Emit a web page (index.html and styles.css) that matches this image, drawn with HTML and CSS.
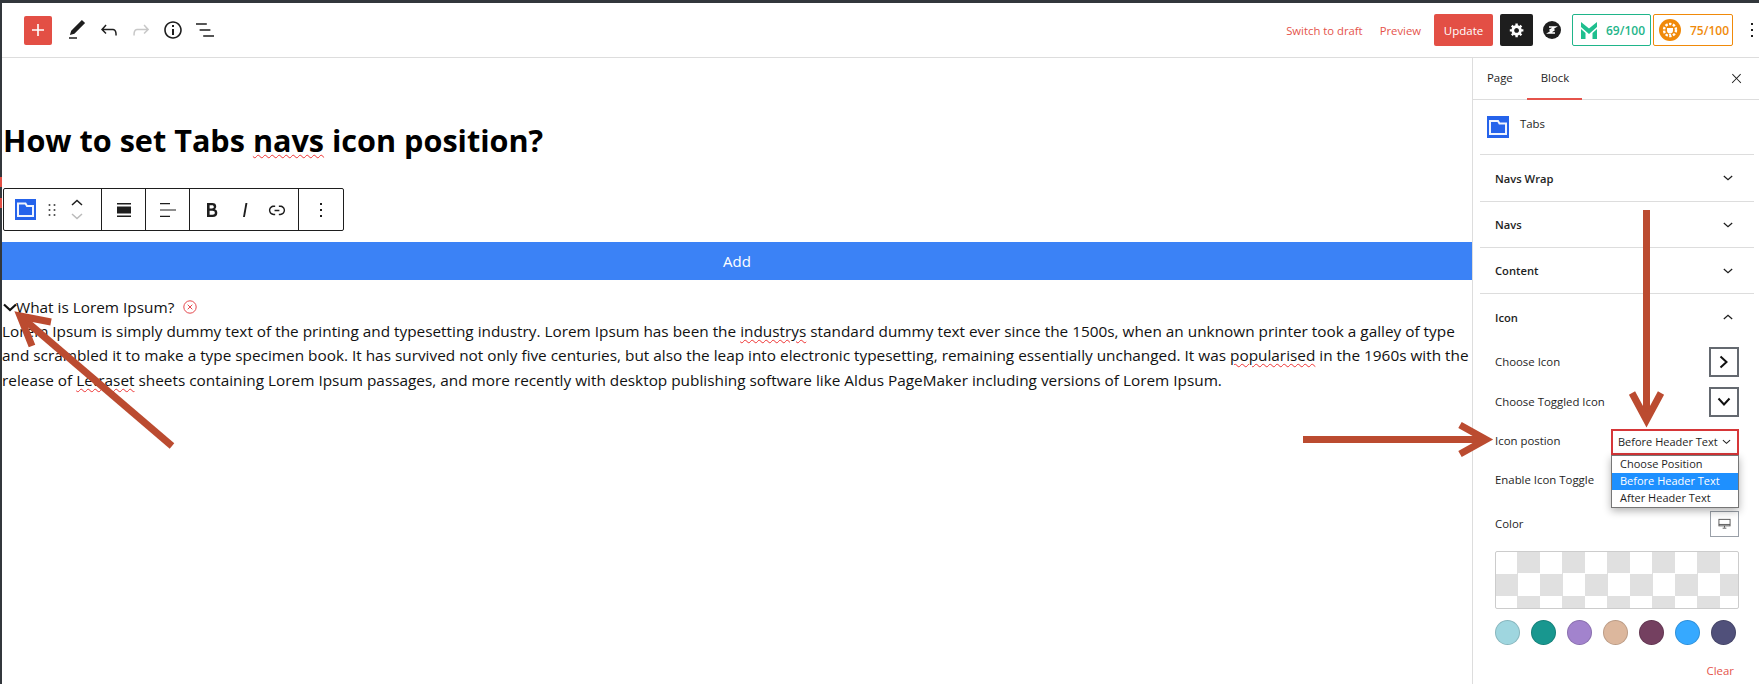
FILE: index.html
```html
<!DOCTYPE html>
<html lang="en">
<head>
    <meta charset="UTF-8">
    <meta name="viewport" content="width=device-width, initial-scale=1.0">
    <title>How to set Tabs navs icon position?</title>
    <link rel="stylesheet" href="styles.css">
</head>
<body>
<div class="app">

    <header class="topbar">
        <div class="tools">
            <button class="add-btn"><svg viewBox="0 0 24 24" width="24" height="24"><path d="M18 11.2h-5.2V6h-1.6v5.2H6v1.6h5.2V18h1.6v-5.2H18z"/></svg></button>
            <svg class="tool" viewBox="0 0 24 24" width="24" height="24"><path d="M20.1 5.1L16.9 2 6.2 12.7l-1.3 4.4 4.5-1.3L20.1 5.1zM4 20.8h8v-1.5H4v1.5z"/></svg>
            <svg class="tool" viewBox="0 0 24 24" width="24" height="24"><path d="M18.3 11.7c-.6-.6-1.4-.9-2.3-.9H6.7l2.9-3.3-1.1-1-4.5 5L8.5 16l1-1-2.7-2.7H16c.5 0 .9.2 1.3.5 1 1 1 3.4 1 4.5v.3h1.5v-.2c0-1.5 0-4.3-1.5-5.7z"/></svg>
            <svg class="tool muted" viewBox="0 0 24 24" width="24" height="24"><path d="M15.6 6.5l-1.1 1 2.9 3.3H8c-.9 0-1.7.3-2.3.9-1.4 1.5-1.4 4.2-1.4 5.6v.2h1.5v-.3c0-1.1 0-3.5 1-4.5.3-.3.7-.5 1.3-.5h9.2L14.5 15l1.1 1.1 4.6-4.6-4.6-5z"/></svg>
            <svg class="tool" viewBox="0 0 24 24" width="24" height="24"><path d="M12 3.2c-4.8 0-8.8 3.9-8.8 8.8 0 4.8 3.9 8.8 8.8 8.8 4.8 0 8.8-3.9 8.8-8.8 0-4.8-4-8.8-8.8-8.8zm0 16c-4 0-7.2-3.3-7.2-7.2C4.8 8 8 4.8 12 4.8s7.2 3.3 7.2 7.2c0 4-3.2 7.2-7.2 7.2zM11 17h2v-6h-2v6zm0-8h2V7h-2v2z"/></svg>
            <svg class="tool" viewBox="0 0 24 24" width="24" height="24"><path d="M13.8 5.2H3v1.5h10.8V5.2zm-3.6 12v1.5H21v-1.5H10.2zm7.2-6H6.6v1.5h10.8v-1.5z"/></svg>
        </div>
        <div class="actions">
            <a class="link-red">Switch to draft</a>
            <a class="link-red preview">Preview</a>
            <button class="update-btn">Update</button>
            <button class="gear-btn"><svg viewBox="0 0 20 20" width="16" height="16"><path d="M18 12h-2.18c-.17.7-.44 1.35-.81 1.93l1.54 1.54-2.1 2.1-1.54-1.54c-.58.36-1.23.63-1.91.79V19H8v-2.18c-.68-.16-1.33-.43-1.91-.79l-1.54 1.54-2.12-2.12 1.54-1.54c-.36-.58-.63-1.23-.79-1.91H1V9.03h2.17c.16-.7.44-1.35.8-1.94L2.43 5.55l2.1-2.1 1.54 1.54c.58-.37 1.24-.64 1.93-.81V2h3v2.18c.68.16 1.33.43 1.91.79l1.54-1.54 2.12 2.12-1.54 1.54c.36.59.64 1.24.8 1.94H18V12zm-8.5 1.5c1.66 0 3-1.34 3-3s-1.34-3-3-3-3 1.34-3 3 1.34 3 3 3z"/></svg></button>
            <svg class="z-logo" viewBox="0 0 18 18" width="18" height="18"><circle cx="9" cy="9" r="9" fill="#1e1e1e"/><path d="M6 6h6L6.500 9.500M11.500 8.500L6 12h6" fill="none" stroke="#fff" stroke-width="1.700"/></svg>
            <div class="score score-green">
                <svg viewBox="0 0 16 17" width="16" height="17"><path d="M0 0l8 6.500L16 0v5L8 12 0 5zM0 7l4.500 4v6H0zM16 7l-4.500 4v6H16z" fill="#1fbf8f"/></svg>
                <span>69/100</span>
            </div>
            <div class="score score-orange">
                <svg viewBox="0 0 22 22" width="22" height="22"><circle cx="11" cy="11" r="11" fill="#f08a0a"/><circle cx="11" cy="11" r="6" fill="none" stroke="#fff" stroke-width="2.4" stroke-dasharray="2.4 1.4"/><path d="M8 9h6v2.5a3 3 0 0 1-6 0zM10 16h2v-2h-2z" fill="#fff"/></svg>
                <span>75/100</span>
            </div>
            <svg class="more" viewBox="0 0 24 24" width="24" height="24"><path d="M13 19h-2v-2h2v2zm0-6h-2v-2h2v2zm0-6h-2V5h2v2z"/></svg>
        </div>
    </header>

    <div class="workspace">
        <main class="editor">
            <h1 class="post-title">How to set Tabs <span class="typo">navs</span> icon position?</h1>

            <div class="block-toolbar">
                <div class="tb-group tb-first">
                    <svg class="folder" viewBox="0 0 21 21" width="21" height="21"><rect width="21" height="21" fill="#2563eb"/><path d="M3 4.500h7.500l1.500 2.500h6v10H3z" fill="#2563eb" stroke="#f0f4fe" stroke-width="2"/></svg>
                    <svg class="drag" viewBox="0 0 24 24" width="20" height="20"><path d="M8 7h2V5H8v2zm0 6h2v-2H8v2zm0 6h2v-2H8v2zm6-14v2h2V5h-2zm0 8h2v-2h-2v2zm0 6h2v-2h-2v2z"/></svg>
                    <div class="movers">
                        <svg viewBox="0 0 12 7" width="12" height="7"><path d="M1 6l5-4.5L11 6" fill="none" stroke="#1e1e1e" stroke-width="1.5"/></svg>
                        <svg viewBox="0 0 12 7" width="12" height="7"><path d="M1 1l5 4.5L11 1" fill="none" stroke="#bbb" stroke-width="1.5"/></svg>
                    </div>
                </div>
                <div class="tb-group tb-align">
                    <svg viewBox="0 0 14 14" width="14" height="14"><path d="M0 0h14v1.5H0zM0 3.5h14v7H0zM0 12.5h14V14H0z" fill="#1e1e1e"/></svg>
                </div>
                <div class="tb-group tb-align">
                    <svg viewBox="0 0 16 14" width="16" height="14"><path d="M0 0h10v1.2H0zM0 6.4h16v1.2H0zM0 12.8h10V14H0z" fill="#1e1e1e"/></svg>
                </div>
                <div class="tb-group tb-format">
                    <svg viewBox="0 0 24 24" width="24" height="24"><path d="M14.7 11.3c1-.6 1.5-1.6 1.5-3 0-2.3-1.3-3.4-4-3.4H7v14h5.8c1.4 0 2.5-.3 3.3-1 .8-.7 1.2-1.7 1.2-2.9.1-1.9-.8-3.1-2.6-3.7zm-5.1-4h2.3c.6 0 1.1.1 1.4.4.3.3.5.7.5 1.2s-.2 1-.5 1.2c-.3.3-.8.4-1.4.4H9.6V7.3zm4.6 9c-.4.3-1 .4-1.7.4H9.6v-3.9h2.9c.7 0 1.3.2 1.7.5.4.3.6.8.6 1.5s-.2 1.2-.6 1.5z"/></svg>
                    <svg viewBox="0 0 24 24" width="24" height="24"><path d="M12.5 5L10 19h1.9l2.5-14z"/></svg>
                    <svg viewBox="0 0 24 24" width="22" height="22"><path d="M15.6 7.2H14v1.5h1.6c2 0 3.7 1.7 3.7 3.7s-1.7 3.7-3.7 3.7H14v1.5h1.6c2.8 0 5.2-2.3 5.2-5.2 0-2.9-2.3-5.2-5.2-5.2zM4.7 12.4c0-2 1.7-3.7 3.7-3.7H10V7.2H8.4c-2.9 0-5.2 2.3-5.2 5.2 0 2.9 2.3 5.2 5.2 5.2H10v-1.5H8.4c-2 0-3.7-1.7-3.7-3.7zm4.6.9h5.3v-1.5H9.3v1.5z"/></svg>
                </div>
                <div class="tb-group tb-more">
                    <svg viewBox="0 0 24 24" width="24" height="24"><path d="M13 19h-2v-2h2v2zm0-6h-2v-2h2v2zm0-6h-2V5h2v2z"/></svg>
                </div>
            </div>

            <div class="add-bar">Add</div>

            <div class="tab-head">
                <svg class="tab-chevron" viewBox="0 0 14 9" width="14" height="9"><path d="M1 1.5l6 5.5 6-5.5" fill="none" stroke="#111" stroke-width="2.2"/></svg>
                <span>What is Lorem Ipsum?</span>
                <svg class="tab-close" viewBox="0 0 14 14" width="14" height="14"><circle cx="7" cy="7" r="6.2" fill="none" stroke="#e5484d"/><path d="M4.7 4.7l4.6 4.6M9.3 4.7l-4.6 4.6" stroke="#e5484d"/></svg>
            </div>
            <p class="tab-text">Lorem Ipsum is simply dummy text of the printing and typesetting industry. Lorem Ipsum has been the <span class="typo">industrys</span> standard dummy text ever since the 1500s, when an unknown printer took a galley of type<br>and scrambled it to make a type specimen book. It has survived not only five centuries, but also the leap into electronic typesetting, remaining essentially unchanged. It was <span class="typo">popularised</span> in the 1960s with the<br>release of <span class="typo">Letraset</span> sheets containing Lorem Ipsum passages, and more recently with desktop publishing software like Aldus PageMaker including versions of Lorem Ipsum.</p>
        </main>

        <aside class="sidebar">
            <div class="side-tabs">
                <span class="side-tab">Page</span>
                <span class="side-tab active">Block</span>
                <svg class="side-close" viewBox="0 0 24 24" width="15" height="15"><path d="M13 11.8l6.1-6.3-1-1-6.1 6.2-6.1-6.2-1 1 6.1 6.3-6.5 6.7 1 1 6.5-6.6 6.5 6.6 1-1z"/></svg>
            </div>
            <div class="block-card">
                <svg viewBox="0 0 22 22" width="22" height="22"><rect width="22" height="22" fill="#2563eb"/><path d="M3 5h8l1.500 2.500H19V18H3z" fill="#2563eb" stroke="#f0f4fe" stroke-width="2"/></svg>
                <span>Tabs</span>
            </div>

            <div class="panel">
                <div class="panel-head h47"><span>Navs Wrap</span><svg class="chev" viewBox="0 0 12 7" width="10" height="6"><path d="M1 1l5 4.500L11 1"/></svg></div>
            </div>
            <div class="panel">
                <div class="panel-head"><span>Navs</span><svg class="chev" viewBox="0 0 12 7" width="10" height="6"><path d="M1 1l5 4.500L11 1"/></svg></div>
            </div>
            <div class="panel">
                <div class="panel-head"><span>Content</span><svg class="chev" viewBox="0 0 12 7" width="10" height="6"><path d="M1 1l5 4.500L11 1"/></svg></div>
            </div>
            <div class="panel">
                <div class="panel-head h53"><span>Icon</span><svg class="chev" viewBox="0 0 12 7" width="10" height="6"><path d="M1 6l5-4.500L11 6"/></svg></div>

                <div class="panel-body">
                    <div class="row row-icon">
                        <span>Choose Icon</span>
                        <div class="icon-pick"><svg viewBox="0 0 10 14" width="10" height="14"><path d="M1.500 1.500L7.500 7l-6 5.500" fill="none" stroke="#111" stroke-width="2"/></svg></div>
                    </div>
                    <div class="row row-icon gap10">
                        <span>Choose Toggled Icon</span>
                        <div class="icon-pick"><svg viewBox="0 0 14 10" width="14" height="10"><path d="M1.500 1.500L7 7.500l5.500-6" fill="none" stroke="#111" stroke-width="2"/></svg></div>
                    </div>
                    <div class="row row-select">
                        <span>Icon postion</span>
                        <div class="select-wrap">
                            <div class="select-box">
                                <span>Before Header Text</span>
                                <svg viewBox="0 0 10 6" width="9" height="6"><path d="M1 1l4 3.500L9 1" fill="none" stroke="#222" stroke-width="1.200"/></svg>
                            </div>
                            <ul class="select-menu">
                                <li>Choose Position</li>
                                <li class="selected">Before Header Text</li>
                                <li>After Header Text</li>
                            </ul>
                        </div>
                    </div>
                    <div class="row row-toggle"><span>Enable Icon Toggle</span></div>
                    <div class="row row-color">
                        <span>Color</span>
                        <div class="device-btn"><svg viewBox="0 0 14 12" width="13" height="12"><rect x="1" y="1" width="12" height="7" fill="none" stroke="#555" stroke-width="1"/><path d="M1 6.500h12M5 10.500h4M7 8v2" stroke="#555" fill="none"/></svg></div>
                    </div>
                    <div class="color-preview"></div>
                    <div class="swatches">
                        <span class="swatch s1"></span>
                        <span class="swatch s2"></span>
                        <span class="swatch s3"></span>
                        <span class="swatch s4"></span>
                        <span class="swatch s5"></span>
                        <span class="swatch s6"></span>
                        <span class="swatch s7"></span>
                    </div>
                    <div class="clear-row"><a class="link-red">Clear</a></div>
                </div>
            </div>
        </aside>
    </div>
</div>

<!-- small red marks on the left edge -->
<span class="edge-mark mark-a"></span>
<span class="edge-mark mark-b"></span>

<!-- annotation arrows drawn on top of the screenshot -->
<svg class="arrows" viewBox="0 0 1759 684" width="1759" height="684">
    <g fill="none" stroke="#bb4b30" stroke-width="7">
        <path d="M172 446L20 316"/>
        <path d="M51 322L20 316L32 346"/>
        <path d="M1646.500 210V420"/>
        <path d="M1632 393L1646.500 420L1661 393"/>
        <path d="M1303 439.500H1480"/>
        <path d="M1460 425L1486 439.500L1460 454"/>
    </g>
</svg>
</body>
</html>
```

FILE: styles.css
```css
* {
    box-sizing: border-box;
}
html, body {
    margin: 0;
    height: 100%;
    overflow: hidden;
}
body {
    position: relative;
    font-family: "Open Sans", sans-serif;
    color: #1e1e1e;
    background: #fff;
}
svg {
    display: block;
    fill: currentColor;
}
.app {
    height: 684px;
    border-top: 3px solid #32373c;
    border-left: 2px solid #32373c;
    display: flex;
    flex-direction: column;
}

/* top bar */
.topbar {
    height: 55px;
    flex: none;
    display: flex;
    justify-content: space-between;
    align-items: center;
    border-bottom: 1px solid #ddd;
}
.tools {
    display: flex;
    align-items: center;
    margin-left: 22px;
    gap: 8px;
}
.add-btn {
    width: 28px;
    height: 29px;
    padding: 0;
    border: 0;
    border-radius: 2px;
    background: #e34f45;
    color: #fff;
    display: flex;
    align-items: center;
    justify-content: center;
    margin-right: 5px;
}
.tool {
    color: #1e1e1e;
}
.muted {
    color: #c8c8c8;
}
.actions {
    display: flex;
    align-items: center;
    font-size: 11.300px;
}
.link-red {
    color: #e5534b;
}
.preview {
    margin-left: 17px;
}
.update-btn {
    width: 59px;
    height: 32px;
    margin-left: 13px;
    border: 0;
    border-radius: 2px;
    background: #e34f45;
    color: #fff;
    font: 11.500px "Open Sans", sans-serif;
}
.gear-btn {
    width: 33px;
    height: 32px;
    margin-left: 7px;
    padding: 0;
    border: 0;
    border-radius: 2px;
    background: #1e1e1e;
    color: #fff;
    display: flex;
    align-items: center;
    justify-content: center;
}
.z-logo {
    margin-left: 10px;
}
.score {
    height: 32px;
    margin-left: 2px;
    border: 1px solid;
    border-radius: 2px;
    display: flex;
    align-items: center;
    font-weight: 600;
    font-size: 12px;
}
.score-green {
    width: 79px;
    margin-left: 11px;
    padding-left: 8px;
    gap: 9px;
    color: #1fb58a;
}
.score-orange {
    width: 80px;
    padding-left: 5px;
    gap: 9px;
    color: #f08a0a;
}
.more {
    margin-left: 7px;
    margin-right: -5px;
    width: 24px;
}

/* editor */
.workspace {
    flex: 1;
    display: flex;
    min-height: 0;
}
.editor {
    flex: 1;
    min-width: 0;
    padding-top: 61px;
}
.post-title {
    margin: 0 0 0 1px;
    height: 43px;
    font-size: 30.600px;
    line-height: 43px;
    font-weight: 700;
    color: #000;
    white-space: nowrap;
}
.typo {
    text-decoration: underline wavy #e33;
    text-decoration-thickness: 1px;
    text-underline-offset: 2px;
}
.block-toolbar {
    width: 341px;
    height: 43px;
    margin: 26px 0 0 1px;
    border: 1px solid #1e1e1e;
    border-radius: 2px;
    display: flex;
    background: #fff;
}
.tb-group {
    display: flex;
    align-items: center;
    justify-content: center;
    border-right: 1px solid #1e1e1e;
}
.tb-group:last-child {
    border-right: 0;
}
.tb-first {
    width: 98px;
    justify-content: flex-start;
    padding-left: 11px;
}
.drag {
    margin-left: 6px;
}
.movers {
    margin-left: 9px;
    display: flex;
    flex-direction: column;
    gap: 7px;
}
.tb-align {
    width: 44px;
}
.tb-format {
    width: 109px;
    gap: 9px;
}
.tb-more {
    flex: 1;
}
.add-bar {
    height: 38px;
    margin-top: 11px;
    background: #3b82f6;
    color: #fff;
    font-size: 15px;
    line-height: 38px;
    text-align: center;
}
.tab-head {
    height: 24px;
    margin-top: 15px;
    display: flex;
    align-items: center;
    font-size: 15.350px;
    color: #111;
}
.tab-chevron {
    margin-left: 1px;
    margin-right: -1px;
}
.tab-close {
    margin-left: 9px;
}
.tab-text {
    margin: 0;
    font-size: 15.350px;
    line-height: 24.300px;
    color: #111;
    white-space: nowrap;
}

/* sidebar */
.sidebar {
    width: 287px;
    flex: none;
    border-left: 1px solid #ddd;
    padding-left: 7px;
    padding-right: 5px;
    font-size: 11.400px;
}
.side-tabs {
    height: 42px;
    margin-left: -7px;
    margin-right: -5px;
    border-bottom: 1px solid #ddd;
    display: flex;
    align-items: center;
    position: relative;
    padding-left: 14px;
}
.side-tab {
    height: 42px;
    line-height: 39px;
    margin-right: 28px;
}
.side-tab.active {
    margin-left: -14px;
    padding: 0 13px 0 14px;
    border-bottom: 2px solid #e5534b;
}
.side-close {
    margin-left: auto;
    margin-right: 15px;
}
.block-card {
    height: 54px;
    margin-left: 7px;
    display: flex;
    align-items: flex-start;
    gap: 11px;
    padding-top: 16px;
}
.panel {
    border-top: 1px solid #ddd;
}
.panel-head {
    height: 45px;
    padding: 0 21px 0 15px;
    display: flex;
    align-items: center;
    justify-content: space-between;
    font-weight: 600;
    font-size: 11.200px;
}
.h47 {
    height: 46px;
}
.h53 {
    height: 46px;
}
.chev path {
    fill: none;
    stroke: #1e1e1e;
    stroke-width: 1.500;
}
.panel-body {
    padding: 7px 15px 0 15px;
}
.row {
    display: flex;
    align-items: center;
    justify-content: space-between;
}
.row > span {
    margin-top: -2px;
}
.row-icon {
    height: 30px;
}
.gap10 {
    margin-top: 10px;
}
.icon-pick {
    width: 30px;
    height: 30px;
    border: 2px solid #646970;
    display: flex;
    align-items: center;
    justify-content: center;
}
.row-select {
    height: 25px;
    margin-top: 12px;
}
.select-wrap {
    position: relative;
    width: 128px;
}
.select-box {
    height: 26px;
    border: 2px solid #d63638;
    padding: 0 6px 0 5px;
    display: flex;
    align-items: center;
    justify-content: space-between;
    font-size: 11px;
}
.select-menu {
    position: absolute;
    top: 26px;
    left: 0;
    right: 0;
    margin: 0;
    padding: 0;
    list-style: none;
    background: #fff;
    border: 1px solid #767676;
    box-shadow: 0 3px 8px rgba(0, 0, 0, .3);
    font-size: 11px;
    line-height: 16px;
    z-index: 2;
}
.select-menu li {
    height: 17px;
    padding-left: 8px;
}
.select-menu .selected {
    background: #1e90ff;
    color: #fff;
}
.row-toggle {
    height: 20px;
    margin-top: 16px;
}
.row-color {
    height: 26px;
    margin-top: 21px;
}
.device-btn {
    width: 29px;
    height: 26px;
    border: 1px solid #9aa0a8;
    display: flex;
    align-items: center;
    justify-content: center;
}
.color-preview {
    height: 58px;
    margin-top: 14px;
    border: 1px solid #ccc;
    border-radius: 2px;
    background: repeating-conic-gradient(#e0e0e0 0 25%, #fff 0 50%) -1px -1px / 45px 45px;
}
.swatches {
    margin-top: 11px;
    padding-right: 3px;
    display: flex;
    justify-content: space-between;
}
.swatch {
    width: 25px;
    height: 25px;
    border-radius: 50%;
    border: 1px solid rgba(0, 0, 0, .15);
}
.s1 { background: #9fd6df; }
.s2 { background: #18978f; }
.s3 { background: #a283cd; }
.s4 { background: #dcb79d; }
.s5 { background: #744060; }
.s6 { background: #36a9ff; }
.s7 { background: #50507a; }
.clear-row {
    margin-top: 18px;
    text-align: right;
    padding-right: 5px;
}

/* overlays */
.edge-mark {
    position: absolute;
    left: 0;
    width: 2px;
    background: #e34f45;
}
.mark-a {
    top: 177px;
    height: 10px;
}
.mark-b {
    top: 198px;
    height: 10px;
}
.arrows {
    position: absolute;
    top: 0;
    left: 0;
    z-index: 5;
    pointer-events: none;
}
```
